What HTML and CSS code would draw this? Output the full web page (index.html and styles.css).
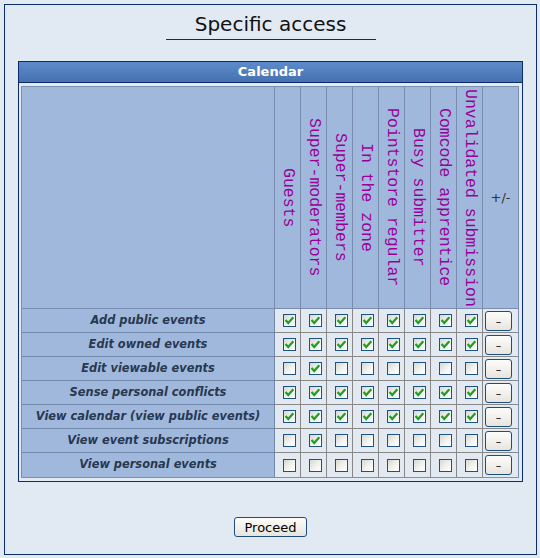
FILE: index.html
```html
<!DOCTYPE html>
<html>
<head>
<meta charset="utf-8">
<title>Specific access</title>
<link rel="stylesheet" href="styles.css">
</head>
<body>
<svg class="defs" width="0" height="0"><symbol id="tick" viewBox="0 0 13 13"><path d="M2.6 6.1 L5.2 9 L10.3 3.3" fill="none" stroke="#21a121" stroke-width="2.3"/></symbol></svg>
<div class="page">
  <h1 class="title">Specific access</h1>
  <div class="panel">
    <div class="panel-head">Calendar</div>
    <div class="panel-body">
      <div class="perm">
        <div class="row head">
          <div class="cell"></div>
          <div class="cell hv"><span>Guests</span></div>
          <div class="cell hv"><span>Super-moderators</span></div>
          <div class="cell hv"><span>Super-members</span></div>
          <div class="cell hv"><span>In the zone</span></div>
          <div class="cell hv"><span>Pointstore regular</span></div>
          <div class="cell hv"><span>Busy submitter</span></div>
          <div class="cell hv"><span>Comcode apprentice</span></div>
          <div class="cell hv"><span>Unvalidated submission</span></div>
          <div class="cell hp">+/-</div>
        </div>
        <div class="row">
          <div class="cell lab">Add public events</div>
          <div class="cell chk"><span class="cb"><svg><use href="#tick"/></svg></span></div>
          <div class="cell chk"><span class="cb"><svg><use href="#tick"/></svg></span></div>
          <div class="cell chk"><span class="cb"><svg><use href="#tick"/></svg></span></div>
          <div class="cell chk"><span class="cb"><svg><use href="#tick"/></svg></span></div>
          <div class="cell chk"><span class="cb"><svg><use href="#tick"/></svg></span></div>
          <div class="cell chk"><span class="cb"><svg><use href="#tick"/></svg></span></div>
          <div class="cell chk"><span class="cb"><svg><use href="#tick"/></svg></span></div>
          <div class="cell chk"><span class="cb"><svg><use href="#tick"/></svg></span></div>
          <div class="cell act"><button class="minus">–</button></div>
        </div>
        <div class="row">
          <div class="cell lab">Edit owned events</div>
          <div class="cell chk"><span class="cb"><svg><use href="#tick"/></svg></span></div>
          <div class="cell chk"><span class="cb"><svg><use href="#tick"/></svg></span></div>
          <div class="cell chk"><span class="cb"><svg><use href="#tick"/></svg></span></div>
          <div class="cell chk"><span class="cb"><svg><use href="#tick"/></svg></span></div>
          <div class="cell chk"><span class="cb"><svg><use href="#tick"/></svg></span></div>
          <div class="cell chk"><span class="cb"><svg><use href="#tick"/></svg></span></div>
          <div class="cell chk"><span class="cb"><svg><use href="#tick"/></svg></span></div>
          <div class="cell chk"><span class="cb"><svg><use href="#tick"/></svg></span></div>
          <div class="cell act"><button class="minus">–</button></div>
        </div>
        <div class="row">
          <div class="cell lab">Edit viewable events</div>
          <div class="cell chk"><span class="cb"></span></div>
          <div class="cell chk"><span class="cb"><svg><use href="#tick"/></svg></span></div>
          <div class="cell chk"><span class="cb"></span></div>
          <div class="cell chk"><span class="cb"></span></div>
          <div class="cell chk"><span class="cb"></span></div>
          <div class="cell chk"><span class="cb"></span></div>
          <div class="cell chk"><span class="cb"></span></div>
          <div class="cell chk"><span class="cb"></span></div>
          <div class="cell act"><button class="minus">–</button></div>
        </div>
        <div class="row">
          <div class="cell lab">Sense personal conflicts</div>
          <div class="cell chk"><span class="cb"><svg><use href="#tick"/></svg></span></div>
          <div class="cell chk"><span class="cb"><svg><use href="#tick"/></svg></span></div>
          <div class="cell chk"><span class="cb"><svg><use href="#tick"/></svg></span></div>
          <div class="cell chk"><span class="cb"><svg><use href="#tick"/></svg></span></div>
          <div class="cell chk"><span class="cb"><svg><use href="#tick"/></svg></span></div>
          <div class="cell chk"><span class="cb"><svg><use href="#tick"/></svg></span></div>
          <div class="cell chk"><span class="cb"><svg><use href="#tick"/></svg></span></div>
          <div class="cell chk"><span class="cb"><svg><use href="#tick"/></svg></span></div>
          <div class="cell act"><button class="minus">–</button></div>
        </div>
        <div class="row">
          <div class="cell lab">View calendar (view public events)</div>
          <div class="cell chk"><span class="cb"><svg><use href="#tick"/></svg></span></div>
          <div class="cell chk"><span class="cb"><svg><use href="#tick"/></svg></span></div>
          <div class="cell chk"><span class="cb"><svg><use href="#tick"/></svg></span></div>
          <div class="cell chk"><span class="cb"><svg><use href="#tick"/></svg></span></div>
          <div class="cell chk"><span class="cb"><svg><use href="#tick"/></svg></span></div>
          <div class="cell chk"><span class="cb"><svg><use href="#tick"/></svg></span></div>
          <div class="cell chk"><span class="cb"><svg><use href="#tick"/></svg></span></div>
          <div class="cell chk"><span class="cb"><svg><use href="#tick"/></svg></span></div>
          <div class="cell act"><button class="minus">–</button></div>
        </div>
        <div class="row">
          <div class="cell lab">View event subscriptions</div>
          <div class="cell chk"><span class="cb"></span></div>
          <div class="cell chk"><span class="cb"><svg><use href="#tick"/></svg></span></div>
          <div class="cell chk"><span class="cb"></span></div>
          <div class="cell chk"><span class="cb"></span></div>
          <div class="cell chk"><span class="cb"></span></div>
          <div class="cell chk"><span class="cb"></span></div>
          <div class="cell chk"><span class="cb"></span></div>
          <div class="cell chk"><span class="cb"></span></div>
          <div class="cell act"><button class="minus">–</button></div>
        </div>
        <div class="row last">
          <div class="cell lab">View personal events</div>
          <div class="cell chk"><span class="cb"></span></div>
          <div class="cell chk"><span class="cb"></span></div>
          <div class="cell chk"><span class="cb"></span></div>
          <div class="cell chk"><span class="cb"></span></div>
          <div class="cell chk"><span class="cb"></span></div>
          <div class="cell chk"><span class="cb"></span></div>
          <div class="cell chk"><span class="cb"></span></div>
          <div class="cell chk"><span class="cb"></span></div>
          <div class="cell act"><button class="minus">–</button></div>
        </div>
      </div>
    </div>
  </div>
  <div class="actions"><button class="proceed">Proceed</button></div>
</div>
</body>
</html>
```
FILE: styles.css
```css
body {
  margin: 0;
  background: #e1e9f2;
  font-family: "DejaVu Sans", Verdana, sans-serif;
}
.defs {
  display: none;
}
.page {
  margin: 4px 3px 3px 4px;
  width: 531px;
  height: 549px;
  border: 1px solid #0c2b6b;
  background: #e1e9f2;
}
.title {
  width: 210px;
  margin: 7px auto 21px;
  padding-bottom: 3px;
  border-bottom: 1px solid #0c2b6b;
  font-size: 20px;
  font-weight: normal;
  line-height: 24px;
  text-align: center;
  color: #111;
}
.panel {
  margin: 0 13px;
  border: 1px solid #0c2b6b;
}
.panel-head {
  height: 20px;
  line-height: 20px;
  background: linear-gradient(#5e8bcb, #4571b1);
  border-bottom: 1px solid #0c2b6b;
  color: #fff;
  font-weight: bold;
  font-size: 13px;
  text-align: center;
}
.panel-body {
  padding: 3px 3px 3px 2px;
}
.perm {
  display: grid;
  grid-template-columns: 253px repeat(8, 26px) 35px;
  grid-template-rows: 222px repeat(7, 24px);
  border: 1px solid #7b8fb1;
}
.row {
  display: contents;
}
.cell {
  box-sizing: border-box;
  border-right: 1px solid #888;
  border-bottom: 1px solid #888;
  background: #e2e9f1;
}
.head .cell {
  background: #a0b8dc;
  border-color: #7a8db0;
}
.hv {
  display: flex;
  align-items: center;
  justify-content: center;
}
.hv span {
  writing-mode: vertical-rl;
  font-family: "Liberation Mono", "Courier New", monospace;
  font-size: 16.5px;
  line-height: 1;
  color: #990099;
  white-space: nowrap;
}
.head .hp {
  border-right: none;
  display: flex;
  align-items: center;
  justify-content: center;
  font-size: 13px;
  color: #333;
}
.cell.lab {
  background: #a0b8dc;
  border-color: #7389ab;
  text-align: center;
  font-size: 11.4px;
  font-weight: bold;
  font-style: italic;
  line-height: 23px;
  color: #283850;
  white-space: nowrap;
}
.chk {
  display: flex;
  align-items: center;
  padding-left: 8px;
}
.cb {
  box-sizing: border-box;
  width: 13px;
  height: 13px;
  border: 1px solid #1d5283;
  background: linear-gradient(135deg, #d8d8d2 0%, #f4f4f1 60%, #ffffff 100%);
  display: block;
  position: relative;
}
.cb svg {
  position: absolute;
  left: -1px;
  top: -1px;
  width: 13px;
  height: 13px;
}
.cell.act {
  border-right: none;
  padding: 2px 0 0 2px;
}
.row.last .cell {
  border-bottom: none;
}
.minus {
  display: block;
  width: 27px;
  height: 20px;
  margin: 0;
  padding: 0;
  border: 1px solid #1d4d80;
  border-radius: 3px;
  background: linear-gradient(#fdfdfb, #e6e4dc);
  font-family: "DejaVu Sans", Verdana, sans-serif;
  font-size: 11px;
  color: #000;
}
.actions {
  display: flex;
  justify-content: center;
  margin-top: 35px;
}
.proceed {
  width: 73px;
  height: 20px;
  margin: 0;
  padding: 0;
  border: 1px solid #1d4d80;
  border-radius: 3px;
  background: linear-gradient(#fdfdfb, #e6e4dc);
  font-family: "DejaVu Sans", Verdana, sans-serif;
  font-size: 13px;
  color: #000;
}
```
